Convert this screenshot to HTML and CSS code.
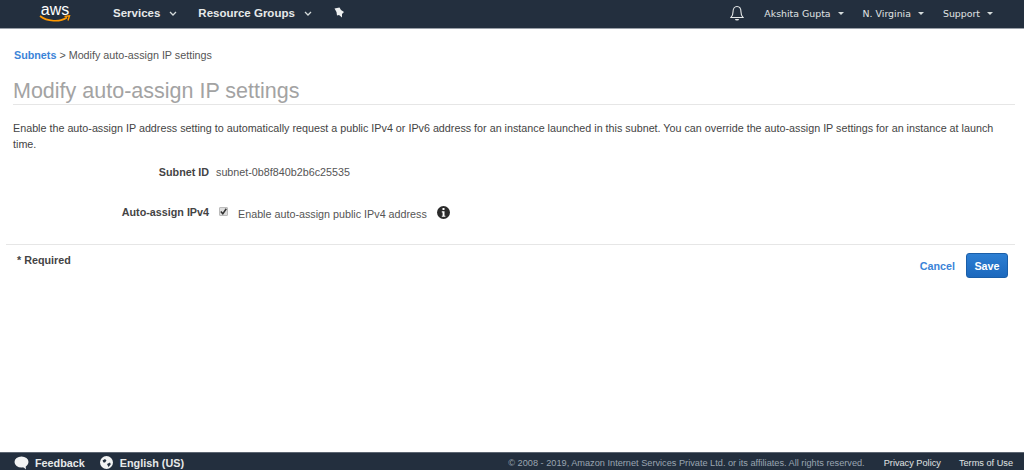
FILE: index.html
```html
<!DOCTYPE html>
<html lang="en">
<head>
<meta charset="utf-8">
<title>Modify auto-assign IP settings</title>
<link rel="stylesheet" href="styles.css">
</head>
<body>
<div class="page">
  <header class="topbar">
    <div class="nav-left">
      <div class="logo">
        <span class="logo-text">aws</span>
        <svg class="logo-smile" width="32" height="8" viewBox="0 0 32 8"><path d="M1 1C8 6.500 21 7.500 28 2.500" fill="none" stroke="#f90" stroke-width="1.600"/><path d="M25.500 1.500 30.500 .8 29 5.500" fill="none" stroke="#f90" stroke-width="1.400"/></svg>
      </div>
      <span class="nav-item services">Services <svg class="chev" width="8" height="5" viewBox="0 0 8 5"><path d="M1 1l3 3 3-3" fill="none" stroke="#d5dbdb" stroke-width="1.300"/></svg></span>
      <span class="nav-item groups">Resource Groups <svg class="chev" width="8" height="5" viewBox="0 0 8 5"><path d="M1 1l3 3 3-3" fill="none" stroke="#d5dbdb" stroke-width="1.300"/></svg></span>
      <svg class="pin" width="12" height="12" viewBox="0 0 12 12"><path d="M1.500 1.500 6.500.5 8 3 11 5 9 7 9 10.500 6 8 4 8.500 3.500 5Z" fill="#eef0f0"/></svg>
    </div>
    <div class="nav-right">
      <svg class="bell" width="14" height="16" viewBox="0 0 14 16"><path d="M1 12.500c1.500-1.500 2-2.500 2-5.500C3 4 4.500 1.500 7 1.500S11 4 11 7c0 3 .5 4 2 5.500Z" fill="none" stroke="#e6e9e9" stroke-width="1.100"/><path d="M5 14h4a2 1.500 0 0 1-4 0Z" fill="#e6e9e9"/></svg>
      <span class="menu user">Akshita Gupta <i class="caret"></i></span>
      <span class="menu region">N. Virginia <i class="caret"></i></span>
      <span class="menu support">Support <i class="caret"></i></span>
    </div>
  </header>

  <main class="content">
    <div class="crumbs"><a class="crumb-link">Subnets</a> &gt; Modify auto-assign IP settings</div>
    <h1 class="title">Modify auto-assign IP settings</h1>
    <p class="intro">Enable the auto-assign IP address setting to automatically request a public IPv4 or IPv6 address for an instance launched in this subnet. You can override the auto-assign IP settings for an instance at launch time.</p>
    <div class="row row-id">
      <span class="label">Subnet ID</span>
      <span class="value">subnet-0b8f840b2b6c25535</span>
    </div>
    <div class="row row-auto">
      <span class="label">Auto-assign IPv4</span>
      <span class="check"><svg width="7" height="7" viewBox="0 0 7 7"><path d="M.8 3.500 2.800 5.700 6.300.8" fill="none" stroke="#333" stroke-width="1.500"/></svg></span>
      <span class="check-text">Enable auto-assign public IPv4 address</span>
      <svg class="info" width="13" height="13" viewBox="0 0 13 13"><circle cx="6.500" cy="6.500" r="6.500" fill="#2b2b2b"/><rect x="5.500" y="2" width="2" height="2" fill="#fff"/><path d="M4.800 5.300H7.500V9.700H8.400V10.800H4.800V9.700H5.600V6.400H4.800Z" fill="#fff"/></svg>
    </div>
    <div class="actions">
      <span class="required">* Required</span>
      <div class="buttons">
        <a class="cancel">Cancel</a>
        <button class="save" type="button">Save</button>
      </div>
    </div>
  </main>

  <footer class="footer">
    <div class="foot-left">
      <svg class="foot-icon" width="15" height="14" viewBox="0 0 15 14"><ellipse cx="7.500" cy="6" rx="7" ry="5.500" fill="#f2f3f3"/><path d="M8 10 12 13.500 11.500 9Z" fill="#f2f3f3"/></svg>
      <span class="foot-strong feedback">Feedback</span>
      <svg class="foot-icon globe" width="13" height="13" viewBox="0 0 13 13"><circle cx="6.500" cy="6.500" r="6.500" fill="#f2f3f3"/><path d="M2.500 4.500 5 3l1.500 1.500L5 6.500H3.500ZM7 8l3-1.500.8 1.800L8.500 11Z" fill="#232f3e"/></svg>
      <span class="foot-strong">English (US)</span>
    </div>
    <div class="foot-right">
      <span class="copy">© 2008 - 2019, Amazon Internet Services Private Ltd. or its affiliates. All rights reserved.</span>
      <span class="foot-link">Privacy Policy</span>
      <span class="foot-link">Terms of Use</span>
    </div>
  </footer>
</div>
</body>
</html>
```
FILE: styles.css
```css
* { box-sizing: border-box; }
html, body { margin: 0; height: 100%; }
body { font-family: "Liberation Sans", Arial, sans-serif; font-size: 10.750px; color: #444; background: #fff; }
.page { display: flex; flex-direction: column; height: 470px; overflow: hidden; }

.topbar { flex: none; height: 29px; padding-bottom: 2px; background: #232f3e; border-bottom: 1px solid #99a0a8; display: flex; justify-content: space-between; color: #eaeded; }
.nav-left { display: flex; align-items: center; }
.nav-right { display: flex; align-items: center; }
.logo { width: 32px; margin-left: 39px; padding-top: 2px; align-self: flex-start; display: flex; flex-direction: column; align-items: center; }
.logo-text { font-size: 16px; line-height: 15px; color: #fff; }
.logo-smile { display: block; margin-top: -2px; }
.nav-item { font-weight: 700; font-size: 11.500px; color: #e6e9e9; display: flex; align-items: center; }
.services { margin-left: 42px; }
.groups { margin-left: 21px; }
.chev { margin-left: 9px; margin-top: 1px; }
.pin { margin-left: 21px; }
.bell { margin-right: 20px; margin-left: 1px; }
.menu { font-family: "DejaVu Sans", sans-serif; font-size: 9.400px; color: #e0e4e4; display: flex; align-items: center; }
.user { margin-right: 19px; }
.region { margin-right: 19px; }
.support { margin-right: 31px; }
.caret { margin-left: 7px; margin-top: 1px; border-left: 3px solid transparent; border-right: 3px solid transparent; border-top: 3px solid #d5dbdb; }

.content { flex: 1; min-height: 0; }
.crumbs { margin: 19px 0 0 14px; line-height: 14px; color: #555; }
.crumb-link { color: #3b84d8; font-weight: 700; }
.title { margin: 17px 9px 0 13px; padding-bottom: 1px; border-bottom: 1px solid #e6e6e6; font-weight: 400; font-size: 21.500px; line-height: 24px; color: #a3a3a3; }
.intro { margin: 15px 14px 0 13px; line-height: 16px; color: #444; }
.row { display: flex; align-items: center; height: 16px; }
.label { width: 209px; text-align: right; font-weight: 700; color: #444; }
.value { margin-left: 7px; color: #555; }
.row-id { margin-top: 12px; }
.row-auto { margin-top: 24px; }
.check { margin: 0 0 1px 10px; width: 9px; height: 9px; display: flex; align-items: center; justify-content: center; background: #ddd; border: 1px solid #bbb; border-radius: 1px; }
.check-text { margin: 4px 0 0 10px; color: #555; }
.info { margin-left: 10px; }
.actions { margin: 24px 9px 0 6px; border-top: 1px solid #e6e6e6; display: flex; justify-content: space-between; padding-top: 8px; }
.required { margin-left: 11px; font-weight: 700; line-height: 14px; color: #444; }
.buttons { display: flex; align-items: center; gap: 11px; margin-right: 7px; }
.cancel { color: #3b84d8; font-weight: 700; }
.save { width: 42px; height: 25px; padding: 0; border: 1px solid #1a5ea8; border-radius: 3px; background: linear-gradient(#2d7fd3, #1c68bd); color: #fff; font: 700 10.750px "Liberation Sans", Arial, sans-serif; }

.footer { flex: none; height: 18px; padding-top: 2px; background: #232f3e; border-top: 1px solid #5d6672; display: flex; justify-content: space-between; align-items: center; }
.foot-left { display: flex; align-items: center; margin-left: 14px; }
.foot-strong { font-weight: 700; font-size: 10.800px; color: #e6e9e9; }
.feedback { margin-left: 6px; }
.globe { margin: 0 7px 0 15px; }
.foot-right { display: flex; align-items: center; margin-right: 11px; font-size: 9.200px; }
.copy { color: #9aa5b1; margin-right: 19px; }
.foot-link { color: #e0e4e4; }
.foot-link + .foot-link { margin-left: 18px; }
```
